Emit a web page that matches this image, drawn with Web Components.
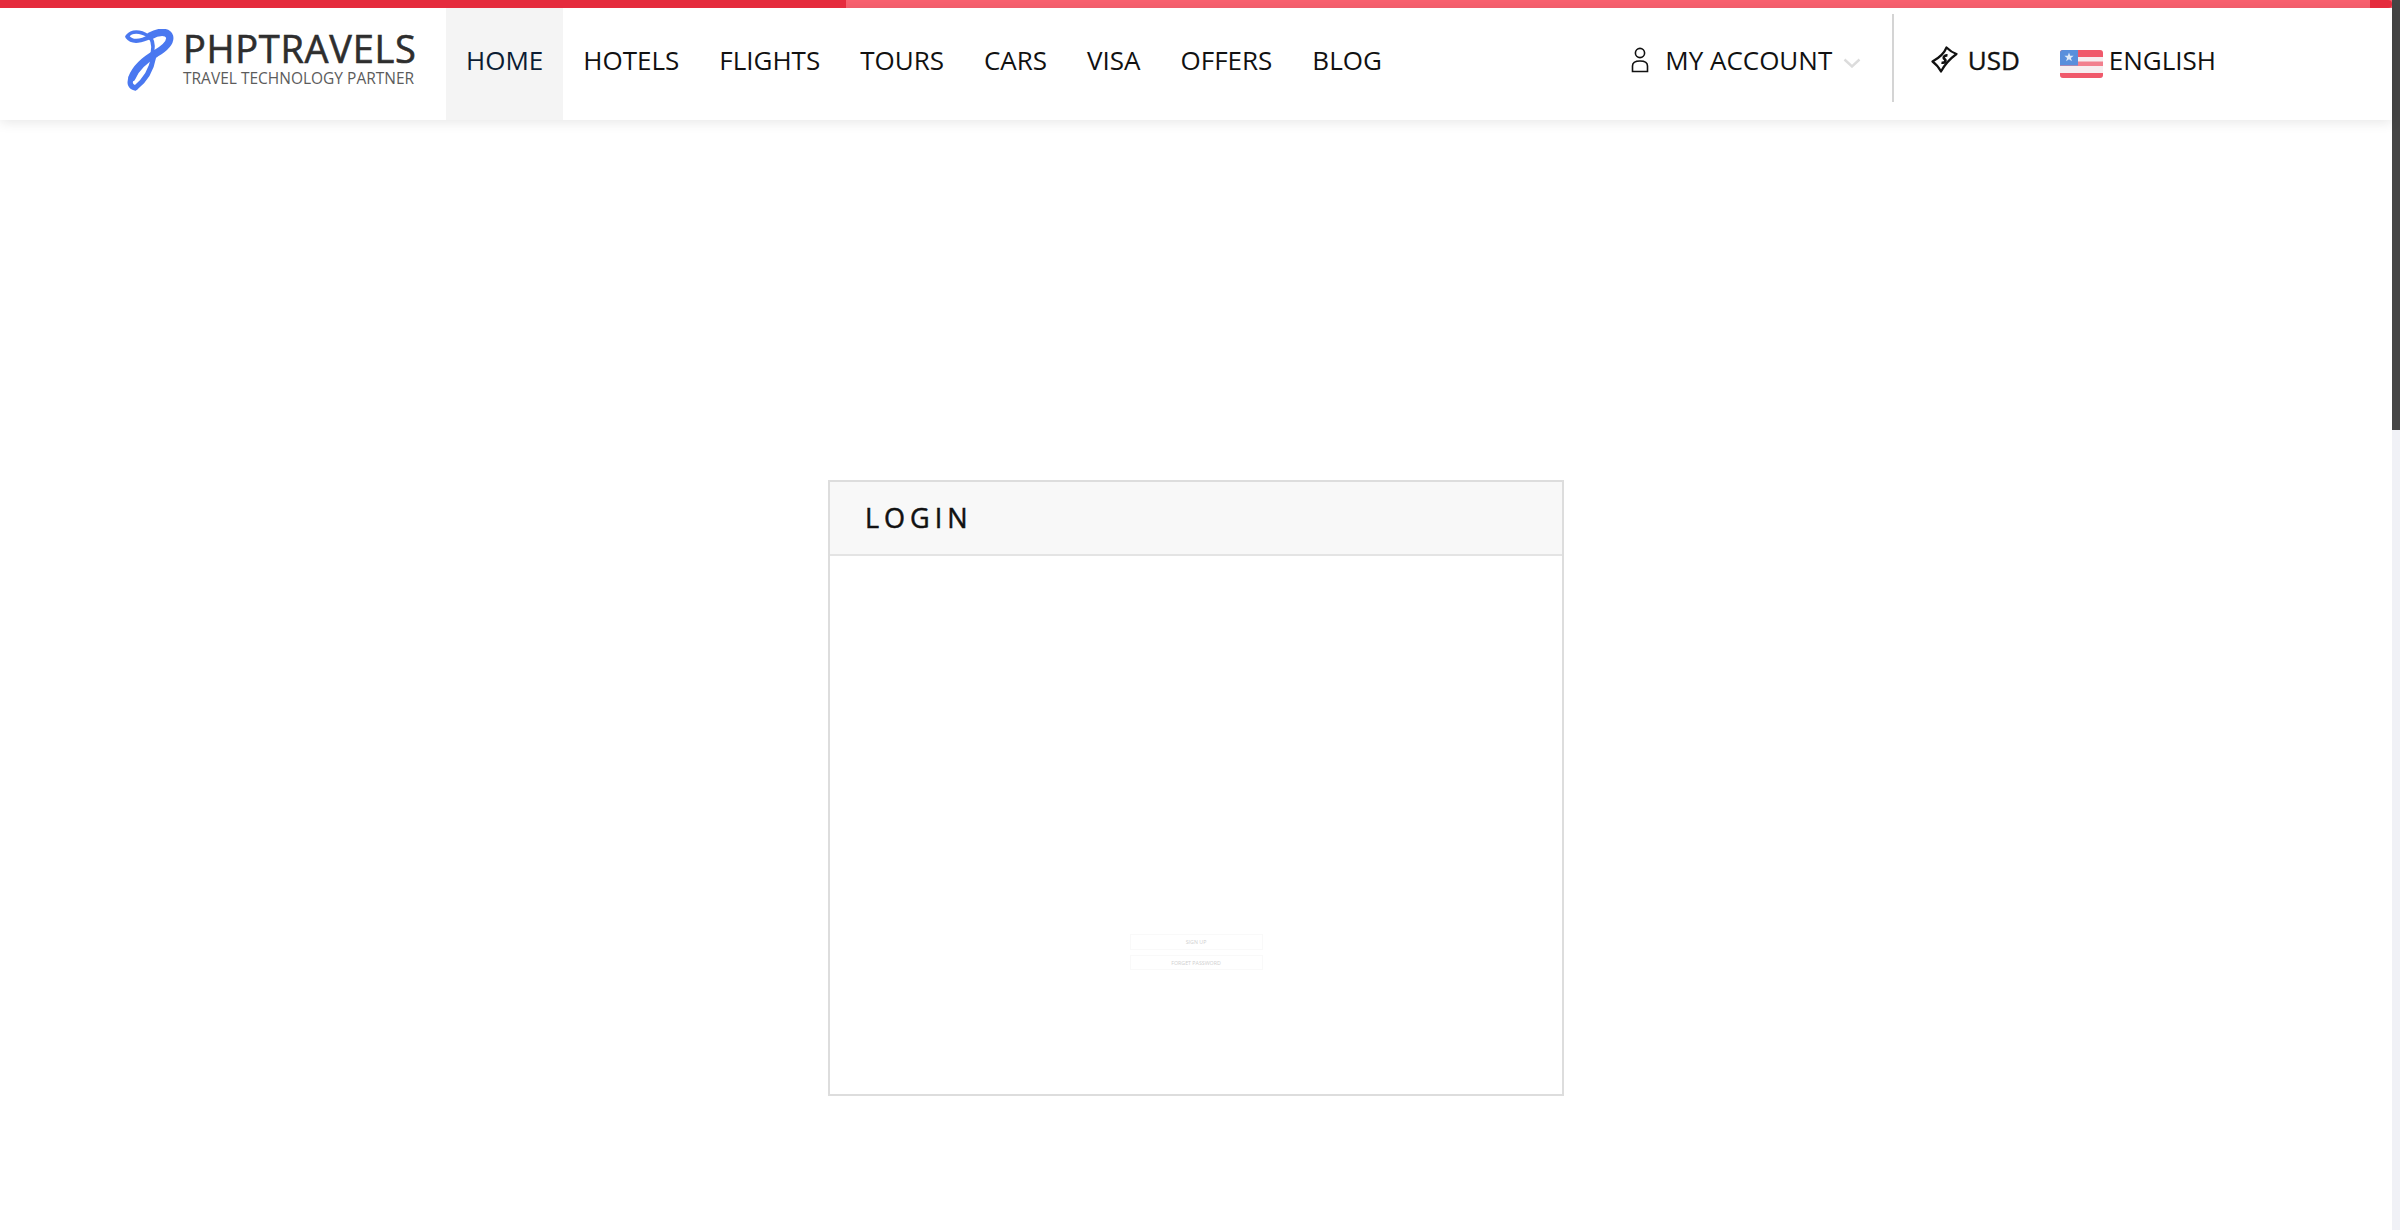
<!DOCTYPE html>
<html lang="en">
<head>
<meta charset="utf-8">
<title>Login</title>
<style>
  html, body { margin: 0; height: 100%; background: #fff; overflow: hidden; }
  body { font-family: "Open Sans", "Liberation Sans", sans-serif; }
  .page { display: grid; grid-template-columns: 1fr 8px; height: 1230px; }
  .main { display: flex; flex-direction: column; min-width: 0; }
</style>
</head>
<body>
<div class="page">
  <div class="main">
    <site-header>
      <nav-link active>HOME</nav-link>
      <nav-link>HOTELS</nav-link>
      <nav-link>FLIGHTS</nav-link>
      <nav-link>TOURS</nav-link>
      <nav-link>CARS</nav-link>
      <nav-link>VISA</nav-link>
      <nav-link>OFFERS</nav-link>
      <nav-link>BLOG</nav-link>
    </site-header>
    <login-card></login-card>
  </div>
  <page-scrollbar></page-scrollbar>
</div>

<script>
// top strip + logo + menu + account area
class SiteHeader extends HTMLElement {
  constructor() {
    super();
    this.attachShadow({ mode: "open" });
    this.shadowRoot.innerHTML = `
      <style>
        :host { display: block; position: relative; z-index: 1; }
        .progress { display: flex; height: 8px; background: #f9616f; }
        .progress .done { width: 846px; background: #e52b3d; }
        .progress .end { width: 22px; margin-left: auto; background: #e52b3d; border-radius: 0 4px 4px 0; }
        .bar { display: flex; align-items: stretch; height: 112px; background: #fff; box-shadow: 0 2px 12px rgba(0,0,0,.1); padding-left: 124px; }
        .logo { display: flex; align-items: center; gap: 7px; width: 322px; flex: none; padding-bottom: 9px; box-sizing: border-box; }
        .logo svg { width: 52px; height: 62px; flex: none; }
        .name { color: #2e2e2e; font-size: 38px; line-height: 38px; letter-spacing: .7px; -webkit-text-stroke: .6px #2e2e2e; }
        .tag { color: #5c5c5c; font-size: 15.5px; line-height: 16px; margin-top: 3px; white-space: nowrap; }
        .text { margin-bottom: 5px; }
        nav { display: flex; align-items: stretch; }
        .right { display: flex; align-items: center; margin-left: auto; padding: 0 176px 9px 0; color: #111; font-size: 26px; }
        .account { display: flex; align-items: center; }
        .account svg.user { width: 20px; height: 26px; margin-right: 15px; }
        .account svg.chev { width: 18px; height: 10px; margin-left: 11px; margin-top: 6px; }
        .sep { width: 2px; height: 88px; background: #d4d4d4; margin: 0 37px 3px 30.5px; }
        .usd { display: flex; align-items: center; gap: 10px; margin-right: 40px; -webkit-text-stroke: .35px #111; }
        .usd svg { width: 27px; height: 27px; -webkit-text-stroke: 0; }
        .lang { display: flex; align-items: center; gap: 6px; }
        .lang svg { width: 43px; height: 28px; margin-top: 9px; }
      </style>
      <div class="progress"><div class="done"></div><div class="end"></div></div>
      <div class="bar">
        <div class="logo">
          <svg viewBox="70 85 155 185" fill="none" stroke="#4a78f0" stroke-linecap="round" stroke-linejoin="round">
            <path d="M80 106 C92 90 118 90 142 106" stroke-width="10"/>
            <path d="M80 108 C95 128 125 120 150 106" stroke-width="13"/>
            <path d="M148 106 C172 92 200 90 206 108 C210 126 188 144 165 158 C130 178 104 203 94 230" stroke-width="22"/>
            <path d="M92 228 C84 248 90 258 103 261" stroke-width="16"/>
            <path d="M158 170 C152 205 132 238 105 260" stroke-width="15"/>
            <path d="M148 108 C158 125 160 145 150 170" stroke-width="11"/>
          </svg>
          <div class="text">
            <div class="name">PHPTRAVELS</div>
            <div class="tag">TRAVEL TECHNOLOGY PARTNER</div>
          </div>
        </div>
        <nav><slot></slot></nav>
        <div class="right">
          <div class="account">
            <svg class="user" viewBox="0 0 20 26" fill="none" stroke="#111" stroke-width="1.6">
              <circle cx="10" cy="6" r="4.6"/>
              <path d="M2.5 24.5 V19 C2.5 15.5 5 14 10 14 C15 14 17.5 15.5 17.5 19 V24.5 Z"/>
            </svg>
            <span>MY ACCOUNT</span>
            <svg class="chev" viewBox="0 0 18 10" fill="none" stroke="#dcdcdc" stroke-width="2.4"><path d="M1.5 1.5 L9 8.5 L16.5 1.5"/></svg>
          </div>
          <div class="sep"></div>
          <div class="usd">
            <svg viewBox="0 0 27 27" fill="none" stroke="#111" stroke-width="2.2" stroke-linejoin="round">
              <path d="M1.5 15.5 C7 12.5 13 8 15.5 1.5 C18 4 21 6.5 25.5 8 C20 12 14 18 10 25.5 C8 22 5 18 1.5 15.5 Z"/>
              <path d="M16.5 9.5 C13.5 9 11.5 11.5 13.5 13 C15.5 14.5 14 17.5 10.5 16.5" stroke-width="2.6"/>
            </svg>
            <span>USD</span>
          </div>
          <div class="lang">
            <svg viewBox="0 0 43 28">
              <defs><clipPath id="r"><rect width="43" height="28" rx="3"/></clipPath></defs>
              <g clip-path="url(#r)">
                <rect width="43" height="28" fill="#f7eef0"/>
                <rect y="0" width="43" height="7" fill="#f0596b"/>
                <rect y="11.5" width="43" height="4.5" fill="#f2808e"/>
                <rect y="23" width="43" height="5" fill="#f0596b"/>
                <rect width="18" height="15.5" fill="#5a8fdc"/>
                <path d="M9 2.5 L10.2 5.8 L13.6 5.8 L10.9 7.9 L11.9 11.2 L9 9.2 L6.1 11.2 L7.1 7.9 L4.4 5.8 L7.8 5.8 Z" fill="#dfe9f8"/>
              </g>
            </svg>
            <span>ENGLISH</span>
          </div>
        </div>
      </div>
    `;
  }
}

class NavLink extends HTMLElement {
  constructor() {
    super();
    this.attachShadow({ mode: "open" });
    this.shadowRoot.innerHTML = `
      <style>
        :host { display: flex; align-items: center; padding: 0 20px 9px; color: #111; font-size: 26px; }
        :host([active]) { background: #f4f4f4; color: #0b1c33; }
      </style>
      <slot></slot>
    `;
  }
}

class LoginCard extends HTMLElement {
  constructor() {
    super();
    this.attachShadow({ mode: "open" });
    this.shadowRoot.innerHTML = `
      <style>
        :host { display: block; width: 736px; height: 616px; margin: 360px 0 0 828px; box-sizing: border-box; border: 2px solid #ddd; }
        .head { height: 70px; padding: 0 0 2px 35px; display: flex; align-items: center; background: #f8f8f8; border-bottom: 2px solid #e4e4e4; font-size: 27px; letter-spacing: 5px; color: #111; -webkit-text-stroke: .5px #111; }
        .body { display: flex; flex-direction: column; align-items: center; gap: 5px; padding-top: 378px; }
        .mini { width: 133px; box-sizing: border-box; border: 1px solid #f9f9f9; display: flex; justify-content: center; align-items: center; font-size: 5.3px; color: #cfcfcf; height: 16px; }
        .mini + .mini { height: 15px; }
      </style>
      <div class="head">LOGIN</div>
      <div class="body">
        <div class="mini">SIGN UP</div>
        <div class="mini">FORGET PASSWORD</div>
      </div>
    `;
  }
}

class PageScrollbar extends HTMLElement {
  constructor() {
    super();
    this.attachShadow({ mode: "open" });
    this.shadowRoot.innerHTML = `
      <style>
        :host { display: block; background: #f0f1f6; }
        .thumb { height: 430px; background: #454545; }
      </style>
      <div class="thumb"></div>
    `;
  }
}

customElements.define("site-header", SiteHeader);
customElements.define("nav-link", NavLink);
customElements.define("login-card", LoginCard);
customElements.define("page-scrollbar", PageScrollbar);
</script>
</body>
</html>
